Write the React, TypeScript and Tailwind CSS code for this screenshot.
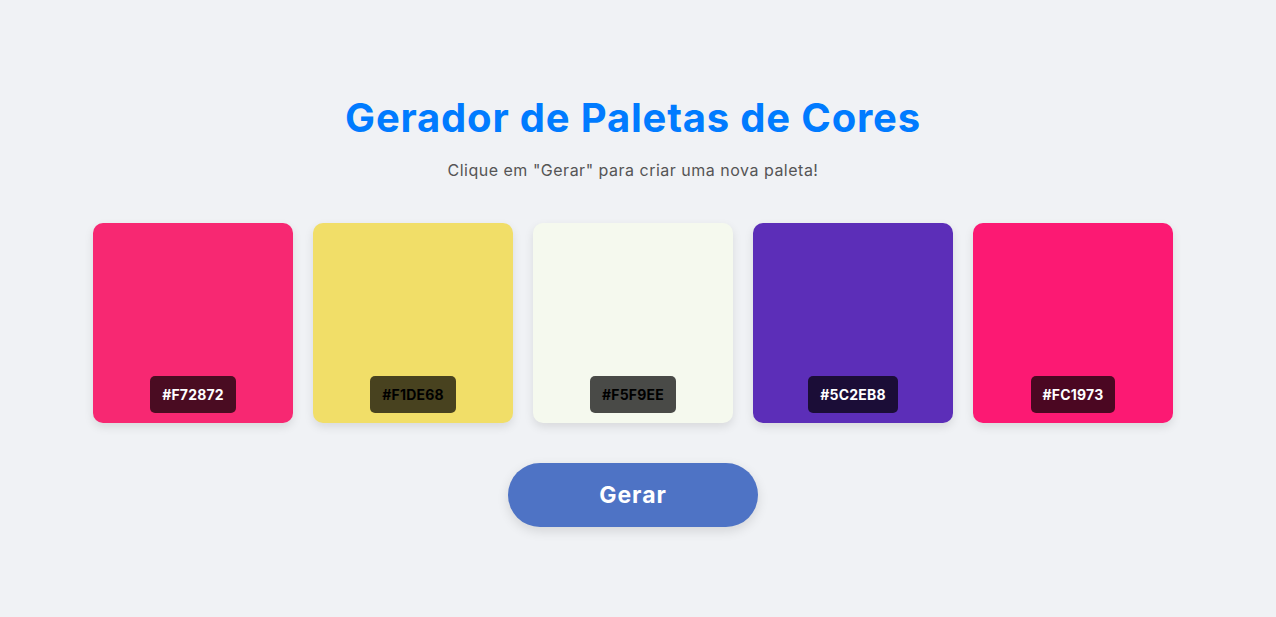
const palette = [
  { hex: '#F72872', dark: true },
  { hex: '#F1DE68', dark: false },
  { hex: '#F5F9EE', dark: false },
  { hex: '#5C2EB8', dark: true },
  { hex: '#FC1973', dark: true },
];

const colorBg: Record<string, string> = {
  '#F72872': 'bg-[#f72872]',
  '#F1DE68': 'bg-[#f1de68]',
  '#F5F9EE': 'bg-[#f5f9ee]',
  '#5C2EB8': 'bg-[#5c2eb8]',
  '#FC1973': 'bg-[#fc1973]',
};

export default function App() {
  return (
    <div className="min-h-screen bg-[#f0f2f5] flex flex-col items-center justify-center font-['Inter','Noto_Sans',sans-serif] pt-[4px] pr-[10px]">
      <h1 className="text-[40px] leading-[48px] font-bold text-[#007bff] tracking-[0.8px]">
        Gerador de Paletas de Cores
      </h1>
      <p className="mt-4 text-base leading-6 text-[#555] tracking-[0.5px]">Clique em "Gerar" para criar uma nova paleta!</p>

      <div className="mt-[41px] flex gap-5">
        {palette.map((c) => (
          <div
            key={c.hex}
            className={`w-[200px] h-[200px] rounded-[10px] shadow-[0_4px_10px_rgba(0,0,0,0.1)] flex items-end justify-center pb-[10px] ${colorBg[c.hex]}`}
          >
            <span
              className={`bg-black/70 rounded-[5px] px-3 py-2 text-sm leading-[21px] font-bold tracking-[0.2px] ${
                c.dark ? 'text-white' : 'text-black'
              }`}
            >
              {c.hex}
            </span>
          </div>
        ))}
      </div>

      <button className="mt-10 w-[250px] h-16 rounded-full bg-[#4e73c5] text-white text-[23px] font-bold tracking-[1px] shadow-[0_4px_12px_rgba(0,0,0,0.12)]">
        Gerar
      </button>
    </div>
  );
}
